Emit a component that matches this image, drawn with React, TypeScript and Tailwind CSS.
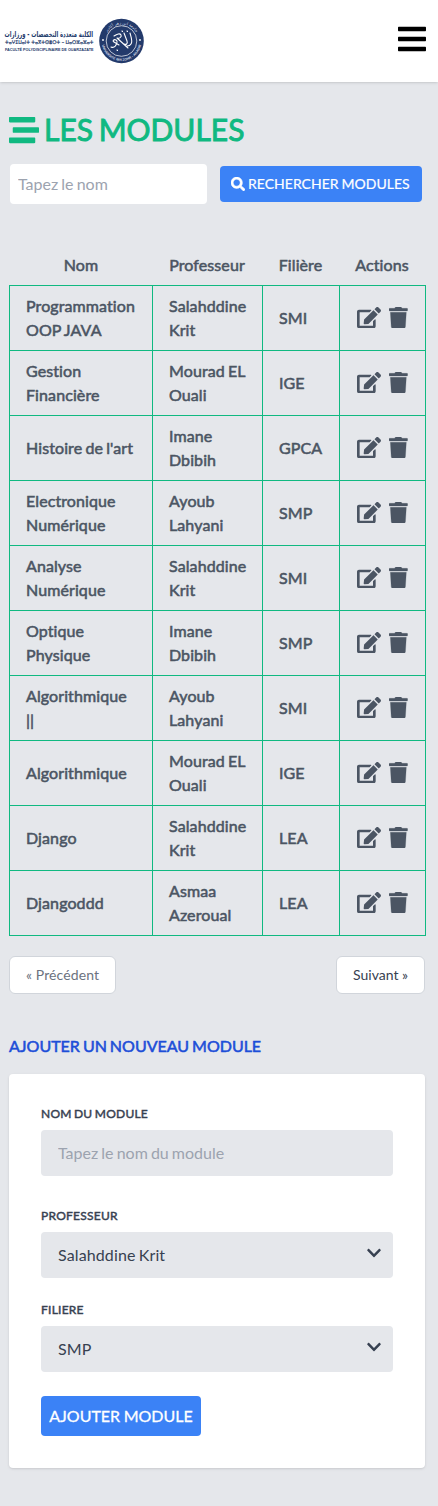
import React from "react";
import { FaBars, FaChevronDown, FaEdit, FaSearch, FaStream, FaTrash } from "react-icons/fa";

type Module = { nom: string; professeur: string; filiere: string };

const modules: Module[] = [
  { nom: "Programmation OOP JAVA", professeur: "Salahddine Krit", filiere: "SMI" },
  { nom: "Gestion Financière", professeur: "Mourad EL Ouali", filiere: "IGE" },
  { nom: "Histoire de l'art", professeur: "Imane Dbibih", filiere: "GPCA" },
  { nom: "Electronique Numérique", professeur: "Ayoub Lahyani", filiere: "SMP" },
  { nom: "Analyse Numérique", professeur: "Salahddine Krit", filiere: "SMI" },
  { nom: "Optique Physique", professeur: "Imane Dbibih", filiere: "SMP" },
  { nom: "Algorithmique ||", professeur: "Ayoub Lahyani", filiere: "SMI" },
  { nom: "Algorithmique", professeur: "Mourad EL Ouali", filiere: "IGE" },
  { nom: "Django", professeur: "Salahddine Krit", filiere: "LEA" },
  { nom: "Djangoddd", professeur: "Asmaa Azeroual", filiere: "LEA" },
];

function Logo() {
  return (
    <svg width="140" height="48" viewBox="0 0 140 48" fill="#233a6b">
      <g fontFamily="'DejaVu Sans', sans-serif">
        <text x="0.5" y="19.6" fontSize="8" fontWeight="700" textLength="88.5" lengthAdjust="spacingAndGlyphs">الكلية متعددة التخصصات - ورزازات</text>
        <text x="1" y="27.2" fontSize="5" textLength="88.5" lengthAdjust="spacingAndGlyphs" stroke="#233a6b" strokeWidth="0.2">ⵜⴰⵖⵉⵡⴰⵏⵜ ⵜⴰⴳⵜⵙⴻⵔⵜ – ⵡⴰⵔⵣⴰⵣⴰⵜ</text>
        <text x="1" y="34.2" fontSize="4.3" fontWeight="700" fontFamily="'Liberation Sans', sans-serif" textLength="88.5" lengthAdjust="spacingAndGlyphs">FACULTÉ POLYDISCIPLINAIRE DE OUARZAZATE</text>
      </g>
      <circle cx="117.5" cy="24" r="22.3" />
      <circle cx="117.5" cy="24" r="15.3" fill="none" stroke="#fff" strokeWidth="0.7" />
      <g fill="none">
        <path id="seal-top" d="M100.7 24a16.8 16.8 0 0 1 33.6 0" />
        <path id="seal-bottom" d="M97.6 24a19.9 19.9 0 0 0 39.8 0" />
      </g>
      <g fill="#d7deea" fontSize="4" fontFamily="'DejaVu Sans', sans-serif">
        <text textAnchor="middle"><textPath href="#seal-top" startOffset="50%">جامعة ابن زهر أكادير</textPath></text>
        <text fontFamily="'Liberation Sans', sans-serif" fontWeight="700" fontSize="3.4" textAnchor="middle"><textPath href="#seal-bottom" startOffset="50%">UNIVERSITÉ IBN ZOHR - AGADIR</textPath></text>
      </g>
      <circle cx="99" cy="23" r="0.9" fill="#fff" />
      <circle cx="136" cy="23" r="0.9" fill="#fff" />
      <g fill="none" stroke="#fff" strokeWidth="1.1" strokeLinecap="round" strokeLinejoin="round">
        <path d="M107 30c2 1 4 0 5-2s2-4 0-5-4 1-2 2l5 3M110 19c3-2 6-3 7-1s-2 4-4 3l11 10M120 16l3 8c1 3-1 4-3 3M126 16c1 4 3 8 1 11-1 2-3 2-4 2" />
        <path d="M118 14l.5.5M123 14l.5.5M113 33l.5.5" />
      </g>
    </svg>
  );
}

const label = "block text-xs leading-4 tracking-[0.25px] [word-spacing:-1px] text-[#374151] [-webkit-text-stroke:0.45px_currentColor]";

function Select({ value }: { value: string }) {
  return (
    <div className="mt-2 flex h-[46px] items-center justify-between rounded bg-[#e5e7eb] pl-[17px] pr-3 text-base text-[#374151]">
      <span className="tracking-[0.12px] [word-spacing:-1px]">{value}</span>
      <FaChevronDown className="mb-1 h-4 w-3.5" />
    </div>
  );
}

export default function App() {
  return (
    <div className="min-h-[1506px] bg-[#e5e7eb] font-['Lato',sans-serif] text-[#4b5563]">
      <header className="flex h-[82px] items-center justify-between bg-white pl-1 pr-3 shadow">
        <Logo />
        <FaBars className="mb-1 h-8 w-7 text-black" />
      </header>

      <main className="pl-[9px] pr-[13px]">
        <h1 className="mt-[30px] flex h-9 items-center gap-[5px] text-[30px] leading-9 text-[#10b981]">
          <FaStream className="size-[30px]" />
          <span className="pb-[3px] [word-spacing:-2px] [-webkit-text-stroke:0.9px_currentColor]">LES MODULES</span>
        </h1>

        <div className="mt-4 flex items-center gap-[13px] pl-px">
          <input
            placeholder="Tapez le nom"
            className="h-10 w-[197px] rounded-sm bg-white px-2 pb-0.5 text-base [word-spacing:-1px] placeholder:text-[#9ca3af]"
          />
          <button className="flex h-9 w-[202px] items-center gap-[3px] rounded bg-[#3b82f6] pl-[11px] text-sm text-white">
            <FaSearch className="size-3.5 [stroke-width:20px]" />
            <span className="tracking-[0.03px] [word-spacing:-0.8px] [-webkit-text-stroke:0.2px_currentColor]">RECHERCHER MODULES</span>
          </button>
        </div>

        <table className="mt-[41px] w-[417px] table-fixed border-collapse text-base leading-6 tracking-[0.1px] [word-spacing:-1px] [-webkit-text-stroke:0.55px_currentColor]">
          <colgroup>
            <col className="w-[143px]" />
            <col className="w-[110px]" />
            <col className="w-[77px]" />
            <col className="w-[86px]" />
          </colgroup>
          <thead>
            <tr className="h-10">
              <th className="font-normal">Nom</th>
              <th className="pr-px font-normal">Professeur</th>
              <th className="pr-px font-normal">Filière</th>
              <th className="pr-px font-normal">Actions</th>
            </tr>
          </thead>
          <tbody>
            {modules.map((m) => (
              <tr key={m.nom} className="h-[65px]">
                <td className="border border-[#10b981] px-4">{m.nom}</td>
                <td className="border border-[#10b981] px-4">{m.professeur}</td>
                <td className="border border-[#10b981] px-4">{m.filiere}</td>
                <td className="border border-[#10b981] pl-[17px]">
                  <div className="flex items-center gap-2">
                    <FaEdit className="h-[21.33px] w-6" />
                    <FaTrash className="h-[21.33px] w-[18.67px] [stroke-width:6px]" />
                  </div>
                </td>
              </tr>
            ))}
          </tbody>
        </table>

        <nav className="mt-5 flex justify-between text-sm leading-5">
          <span className="rounded-md border border-[#d1d5db] bg-white px-4 py-2 tracking-[0.1px] text-[#6b7280]">« Précédent</span>
          <a className="rounded-md border border-[#d1d5db] bg-white px-4 py-2 text-[#374151]">Suivant »</a>
        </nav>

        <h2 className="mt-10 text-base leading-6 text-[#1d4ed8] [word-spacing:-1.1px] [-webkit-text-stroke:0.55px_currentColor]">
          AJOUTER UN NOUVEAU MODULE
        </h2>

        <form className="mt-4 h-[394px] rounded bg-white px-8 pt-8 shadow">
          <label className={label}>NOM DU MODULE</label>
          <input
            placeholder="Tapez le nom du module"
            className="mt-2 block h-[46px] w-full rounded bg-[#e5e7eb] px-[17px] text-base [word-spacing:-1px] placeholder:text-[#9ca3af]"
          />
          <label className={`${label} mt-8`}>PROFESSEUR</label>
          <Select value="Salahddine Krit" />
          <label className={`${label} mt-6`}>FILIERE</label>
          <Select value="SMP" />
          <button className="mt-6 h-10 w-40 rounded bg-[#3b82f6] text-base text-white [word-spacing:-0.5px] [-webkit-text-stroke:0.3px_currentColor]">
            AJOUTER MODULE
          </button>
        </form>
      </main>
    </div>
  );
}
